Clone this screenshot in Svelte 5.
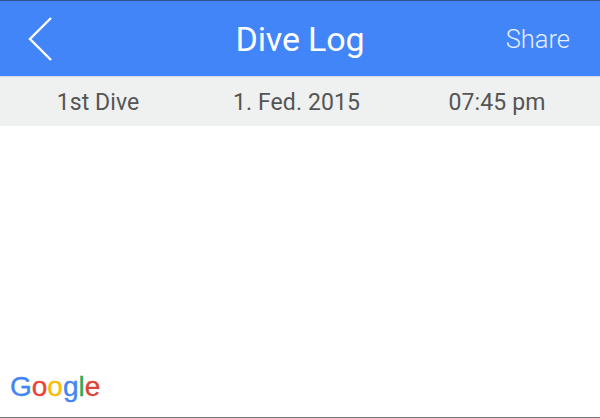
<script>
  const letters = [
    { ch: 'G', color: '#4285f4' },
    { ch: 'o', color: '#ea4335' },
    { ch: 'o', color: '#fbbc05' },
    { ch: 'g', color: '#4285f4' },
    { ch: 'l', color: '#34a853' },
    { ch: 'e', color: '#db4437' }
  ];
</script>

<div class="screen">
  <header class="bar">
    <button class="back" aria-label="Back">
      <svg width="26" height="46" viewBox="0 0 26 46">
        <path d="M25 2 L4 23 L25 44" />
      </svg>
    </button>
    <h1>Dive Log</h1>
    <span class="share">Share</span>
  </header>
  <div class="info">
    <span>1st Dive</span>
    <span>1. Fed. 2015</span>
    <span>07:45 pm</span>
  </div>
  <main class="map">
    <div class="logo">
      {#each letters as l}<span style="color: {l.color}">{l.ch}</span>{/each}
    </div>
  </main>
</div>

<style>
  :global(body) {
    margin: 0;
    background: #fff;
  }
  .screen {
    width: 600px;
    height: 418px;
    display: flex;
    flex-direction: column;
    box-sizing: border-box;
    border-bottom: 1px solid #777;
    font-family: Roboto, sans-serif;
    overflow: hidden;
  }
  .bar {
    height: 75px;
    border-top: 1px solid #2f4f8f;
    background: #4285f9;
    display: grid;
    grid-template-columns: 1fr auto 1fr;
    align-items: center;
    color: #fff;
    flex: none;
  }
  .back {
    justify-self: start;
    margin: 0 0 0 26px;
    padding: 0;
    background: none;
    border: none;
    display: flex;
  }
  .back path {
    fill: none;
    stroke: #fff;
    stroke-width: 2.4;
  }
  h1 {
    margin: 0;
    font-size: 34px;
    font-weight: 400;
    letter-spacing: -0.15px;
  }
  .share {
    justify-self: end;
    margin-right: 30px;
    font-size: 25.5px;
    font-weight: 300;
    color: #e6eeff;
  }
  .info {
    height: 50px;
    flex: none;
    box-sizing: border-box;
    background: #eff0f0;
    border-top: 1px solid #d5dcec;
    padding: 1px 3px 0 0;
    display: grid;
    grid-template-columns: 196px 201px 200px;
    align-items: center;
    justify-items: center;
    color: #555;
    font-size: 23px;
    letter-spacing: 0.1px;
  }
  .map {
    flex: 1;
    display: flex;
    align-items: flex-end;
    padding: 0 0 12px 10px;
  }
  .logo {
    font-family: "Liberation Sans", sans-serif;
    font-size: 28px;
    line-height: 36px;
  }
  .logo span {
    -webkit-text-stroke: 0.35px;
  }
</style>
